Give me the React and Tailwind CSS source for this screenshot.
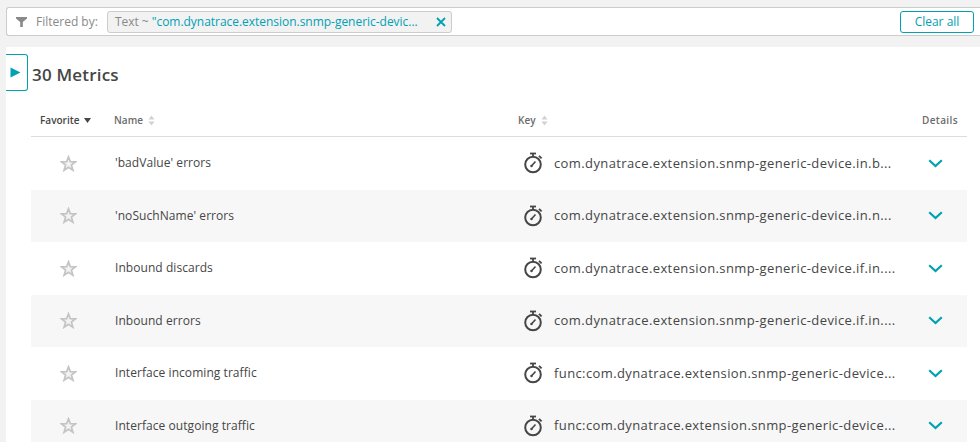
import React from 'react'

const rows = [
  { name: "'badValue' errors", key: 'com.dynatrace.extension.snmp-generic-device.in.b...' },
  { name: "'noSuchName' errors", key: 'com.dynatrace.extension.snmp-generic-device.in.n...' },
  { name: 'Inbound discards', key: 'com.dynatrace.extension.snmp-generic-device.if.in....' },
  { name: 'Inbound errors', key: 'com.dynatrace.extension.snmp-generic-device.if.in....' },
  { name: 'Interface incoming traffic', key: 'func:com.dynatrace.extension.snmp-generic-device...' },
  { name: 'Interface outgoing traffic', key: 'func:com.dynatrace.extension.snmp-generic-device...' },
]

const SortIcon = () => (
  <svg width="7" height="11" viewBox="0 0 7 11" className="ml-[5px]">
    <path d="M3.5 0.5 L6.5 4.5 H0.5 Z M3.5 10.5 L0.5 6.5 H6.5 Z" fill="#d2d2d2" />
  </svg>
)

const Star = () => (
  <svg width="17" height="17" viewBox="0 0 17 17">
    <path
      d="M8.5 1.8 L10.3 6.6 L15.6 6.8 L11.4 10 L12.9 15.2 L8.5 12.2 L4.1 15.2 L5.6 10 L1.4 6.8 L6.7 6.6 Z"
      fill="#f3f3f3"
      stroke="#c4c4c4"
      strokeWidth="1.7"
    />
  </svg>
)

const Stopwatch = () => (
  <svg width="20" height="22" viewBox="0 0 20 22" fill="none" stroke="#454646">
    <circle cx="10" cy="12.5" r="7.8" strokeWidth="2" />
    <path d="M7 1.5 H13" strokeWidth="1.8" />
    <path d="M10 1.5 V4.5" strokeWidth="1.8" />
    <path d="M16 3.8 L18.6 6.4" strokeWidth="1.8" />
    <path d="M8 14.5 L12.5 9.5" strokeWidth="1.6" />
    <circle cx="8.5" cy="14" r="1.2" fill="#454646" stroke="none" />
  </svg>
)

const Chevron = () => (
  <svg width="15" height="9" viewBox="0 0 15 9" fill="none">
    <path d="M1.2 1.2 L7.5 7 L13.8 1.2" stroke="#00a1b2" strokeWidth="2.2" />
  </svg>
)

export default function App() {
  return (
    <div className="w-[980px] h-[442px] overflow-hidden bg-[#f2f2f2] font-['Open_Sans',sans-serif] text-[#454646]">
      {/* Filter bar */}
      <div className="pl-[6px] pt-[7px] h-[47px]">
        <div className="h-[29px] flex items-center bg-white border-y border-l border-[#cccccc] rounded-l-[3px] pl-[9px] pr-[6px]">
          <svg width="11" height="10" viewBox="0 0 11 10" className="mr-[9px] mt-[1px]">
            <path d="M0 0 H11 V1.5 L6.8 5 V10 H4.2 V5 L0 1.5 Z" fill="#898989" />
          </svg>
          <span className="text-[12px] text-[#898989] mr-[9px]">Filtered by:</span>
          <div className="w-[345px] h-[22px] flex items-center justify-between bg-[#f2f2f2] border border-[#cccccc] rounded-[3px] pl-[7px] pr-[5px]">
            <span className="text-[12px] whitespace-nowrap text-[#898989] tracking-[-0.03px]">
              Text ~ <span className="text-[#00a1b2]">"com.dynatrace.extension.snmp-generic-devic...</span>
            </span>
            <svg width="10" height="10" viewBox="0 0 10 10">
              <path d="M1 1 L9 9 M9 1 L1 9" stroke="#00a1b2" strokeWidth="1.8" />
            </svg>
          </div>
          <button className="ml-auto w-[74px] h-[22px] border border-[#00a1b2] rounded-[3px] text-[12px] text-[#00a1b2] bg-white">
            Clear all
          </button>
        </div>
      </div>

      {/* Main panel */}
      <div className="relative ml-[6px] h-[395px] bg-white">
        <button className="absolute left-0 top-[7px] w-[22px] h-[37px] flex items-center justify-center pr-[2px] bg-white border border-l-0 border-[#00a1b2] rounded-r-[3px]">
          <svg width="11" height="11" viewBox="0 0 11 11">
            <path d="M0.5 0.5 L10.5 5.5 L0.5 10.5 Z" fill="#00a1b2" />
          </svg>
        </button>

        <div className="pl-[25px] pr-[13px]">
          <h1 className="h-[57px] pt-[16px] pl-[1px] text-[17px] leading-[24px] font-semibold tracking-[0.2px] text-[#454646]">30 Metrics</h1>

          {/* Table head */}
          <div className="h-[33px] flex items-center border-b border-[#dcdcdc] text-[10px] text-[#6b6b6b]">
            <div className="w-[83px] pl-[9px] flex items-center font-semibold text-[#454646]">
              Favorite
              <svg width="7" height="5" viewBox="0 0 7 5" className="ml-[5px]">
                <path d="M0 0 H7 L3.5 5 Z" fill="#454646" />
              </svg>
            </div>
            <div className="w-[404px] flex items-center font-semibold">
              Name
              <SortIcon />
            </div>
            <div className="flex-1 flex items-center font-semibold">
              Key
              <SortIcon />
            </div>
            <div className="w-[50px] pr-[9px] text-right font-semibold tracking-[0.4px]">Details</div>
          </div>

          {/* Rows */}
          {rows.map((row, i) => (
            <div
              key={row.name}
              className={`h-[52.5px] flex items-center text-[12px] ${i % 2 === 1 ? 'bg-[#f7f7f7]' : 'bg-white'}`}
            >
              <div className="w-[84px] pl-[29px] flex items-center">
                <Star />
              </div>
              <div className="w-[408px] whitespace-nowrap tracking-[0.06px]">{row.name}</div>
              <div className="w-[31px] flex items-center">
                <Stopwatch />
              </div>
              <div className="flex-1 whitespace-nowrap text-[13px] tracking-[0.39px]">{row.key}</div>
              <div className="w-[68px] pl-[29px] flex items-center">
                <Chevron />
              </div>
            </div>
          ))}
        </div>
      </div>
    </div>
  )
}
